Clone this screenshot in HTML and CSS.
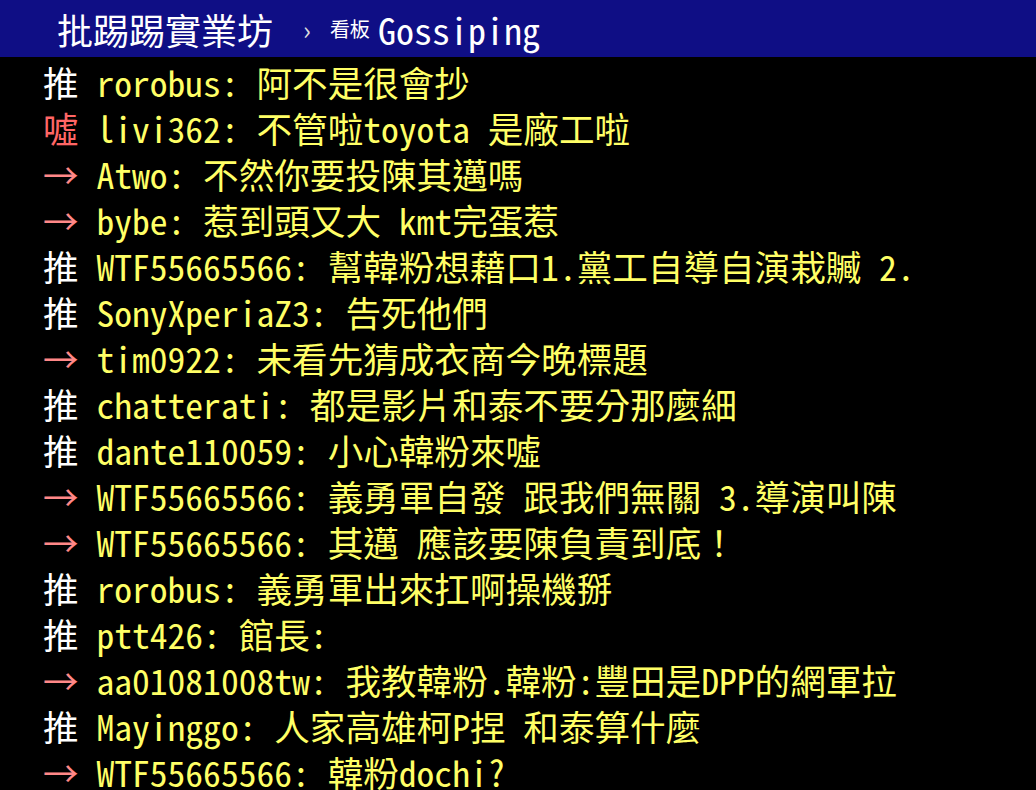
FILE: index.html
```html
<!DOCTYPE html>
<html lang="zh-Hant">
<head>
  <meta charset="UTF-8">
  <title>批踢踢實業坊 › 看板 Gossiping</title>
  <link rel="stylesheet" href="styles.css">
</head>
<body>

  <div class="topbar">
    <span class="brand">批踢踢實業坊</span>
    <span class="sep">›</span>
    <span class="board-label">看板</span>
    <span class="board">Gossiping</span>
  </div>

  <div class="push-list">
    <div class="push"><span class="tag good">推 </span><span class="userid">rorobus</span><span class="content">: 阿不是很會抄</span></div>
    <div class="push"><span class="tag bad">噓 </span><span class="userid">livi362</span><span class="content">: 不管啦toyota 是廠工啦</span></div>
    <div class="push"><span class="tag arrow">→ </span><span class="userid">Atwo</span><span class="content">: 不然你要投陳其邁嗎</span></div>
    <div class="push"><span class="tag arrow">→ </span><span class="userid">bybe</span><span class="content">: 惹到頭又大 kmt完蛋惹</span></div>
    <div class="push"><span class="tag good">推 </span><span class="userid">WTF55665566</span><span class="content">: 幫韓粉想藉口1.黨工自導自演栽贓 2.</span></div>
    <div class="push"><span class="tag good">推 </span><span class="userid">SonyXperiaZ3</span><span class="content">: 告死他們</span></div>
    <div class="push"><span class="tag arrow">→ </span><span class="userid">tim0922</span><span class="content">: 未看先猜成衣商今晚標題</span></div>
    <div class="push"><span class="tag good">推 </span><span class="userid">chatterati</span><span class="content">: 都是影片和泰不要分那麼細</span></div>
    <div class="push"><span class="tag good">推 </span><span class="userid">dante110059</span><span class="content">: 小心韓粉來噓</span></div>
    <div class="push"><span class="tag arrow">→ </span><span class="userid">WTF55665566</span><span class="content">: 義勇軍自發 跟我們無關 3.導演叫陳</span></div>
    <div class="push"><span class="tag arrow">→ </span><span class="userid">WTF55665566</span><span class="content">: 其邁 應該要陳負責到底！</span></div>
    <div class="push"><span class="tag good">推 </span><span class="userid">rorobus</span><span class="content">: 義勇軍出來扛啊操機掰</span></div>
    <div class="push"><span class="tag good">推 </span><span class="userid">ptt426</span><span class="content">: 館長:</span></div>
    <div class="push"><span class="tag arrow">→ </span><span class="userid">aa01081008tw</span><span class="content">: 我教韓粉.韓粉:豐田是DPP的網軍拉</span></div>
    <div class="push"><span class="tag good">推 </span><span class="userid">Mayinggo</span><span class="content">: 人家高雄柯P捏 和泰算什麼</span></div>
    <div class="push"><span class="tag arrow">→ </span><span class="userid">WTF55665566</span><span class="content">: 韓粉dochi?</span></div>
  </div>

</body>
</html>
```

FILE: styles.css
```css
body {
  margin: 0;
  background: #000;
  color: #fff;
  font-family: "Noto Sans Mono CJK TC", "Noto Sans CJK TC", "Liberation Mono", monospace;
  overflow: hidden;
}
.topbar {
  height: 57px;
  background: #0f0e85;
  display: flex;
  align-items: center;
  padding-left: 57px;
  white-space: nowrap;
}
.brand {
  font-size: 36px;
  color: #fff;
}
.sep {
  font-size: 26px;
  color: #ddd;
  margin-left: 30px;
}
.board-label {
  font-size: 20px;
  color: #fff;
  margin-left: 19px;
}
.board {
  font-size: 36px;
  color: #fff;
  margin-left: 8px;
}
.push-list {
  padding: 2px 0 0 43px;
}
.push {
  height: 46px;
  line-height: 46px;
  font-size: 35.6px;
  white-space: pre;
}
.tag.good {
  color: #fff;
}
.tag.bad {
  color: #f66;
}
.tag.arrow {
  color: #f88;
  font-weight: 300;
}
.userid,
.content {
  color: #ff6;
}
```
